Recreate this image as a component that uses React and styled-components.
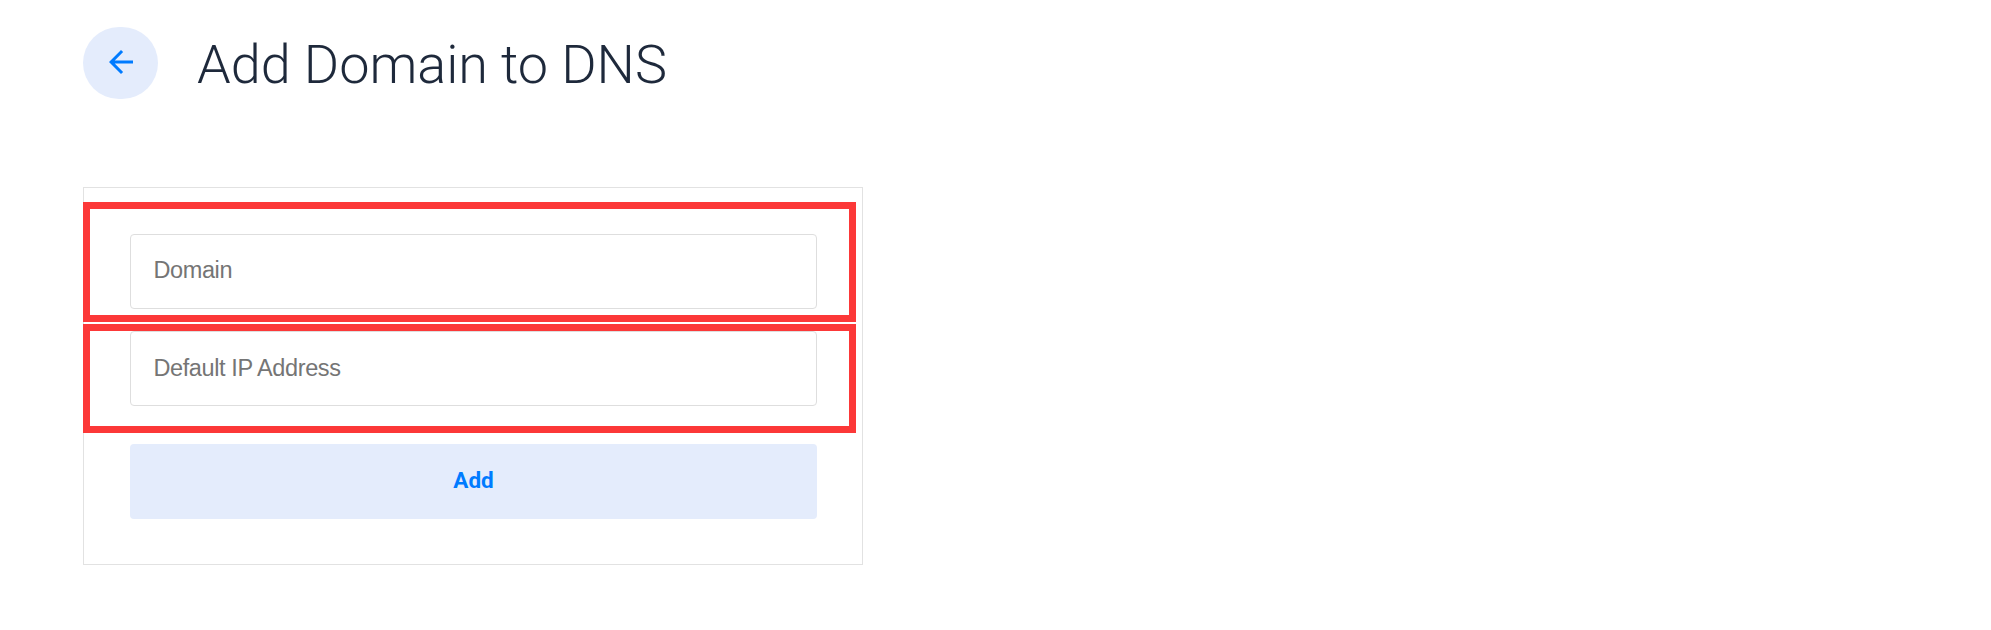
import React from "react";
import styled, { createGlobalStyle } from "styled-components";

const GlobalStyle = createGlobalStyle`
  *, *::before, *::after { box-sizing: border-box; }
  body { margin: 0; background: #fff; font-family: Roboto, sans-serif; }
`;

const Page = styled.main`
  min-height: 630px;
  padding: 27px 83px 0;
`;

const Header = styled.header`
  display: flex;
  align-items: center;
  gap: 39px;
  height: 72px;
  margin-bottom: 88px;
`;

const BackButton = styled.button`
  display: flex;
  align-items: center;
  justify-content: center;
  width: 75px;
  height: 72px;
  padding: 0 0 2px;
  border: 0;
  border-radius: 36px;
  background: #e4ecfc;
  color: #007bff;

  svg {
    display: block;
    width: 36px;
    height: 36px;
    fill: currentColor;
  }
`;

const Title = styled.h1`
  margin: 4px 0 0;
  color: #1e293b;
  font-size: 54px;
  font-weight: 300;
  line-height: 64px;
  letter-spacing: -0.03px;
  white-space: nowrap;
`;

const Card = styled.form`
  position: relative;
  display: flex;
  flex-direction: column;
  width: 780px;
  height: 378px;
  padding: 46px 45px 45px 46px;
  border: 1px solid #e2e2e2;
  background: #fff;
`;

const Field = styled.input`
  width: 687px;
  height: 75px;
  margin: 0 0 ${(p) => p.$gap}px;
  padding: 0 22px ${(p) => p.$padBottom}px 22.5px;
  border: 1px solid #dedede;
  border-radius: 4px;
  background: #fff;
  font-family: "Liberation Sans", Arial, sans-serif;
  font-size: 23.5px;
  letter-spacing: -0.4px;

  &::placeholder { color: #757575; opacity: 1; }
`;

const SubmitButton = styled.button`
  width: 687px;
  height: 75px;
  padding: 0 0 4px;
  border: 0;
  border-radius: 4px;
  background: #e4ecfc;
  color: #007bff;
  font: 700 22.5px Roboto, sans-serif;
`;

const Highlight = styled.div`
  position: absolute;
  top: ${(p) => p.$top}px;
  left: -1px;
  width: 773px;
  height: ${(p) => p.$height}px;
  border: 7px solid #fc3838;
  pointer-events: none;
`;

export default function App() {
  return (
    <Page>
      <GlobalStyle />
      <Header>
        <BackButton type="button" aria-label="Back">
          <svg viewBox="0 0 24 24">
            <path d="M20 11H7.83l5.59-5.59L12 4l-8 8 8 8 1.41-1.41L7.83 13H20v-2z" />
          </svg>
        </BackButton>
        <Title>Add Domain to DNS</Title>
      </Header>
      <Card>
        <Field $gap={22} $padBottom={2} placeholder="Domain" />
        <Field $gap={38} $padBottom={0} placeholder="Default IP Address" />
        <SubmitButton type="button">Add</SubmitButton>
        <Highlight $top={14} $height={120} />
        <Highlight $top={136} $height={109} />
      </Card>
    </Page>
  );
}
